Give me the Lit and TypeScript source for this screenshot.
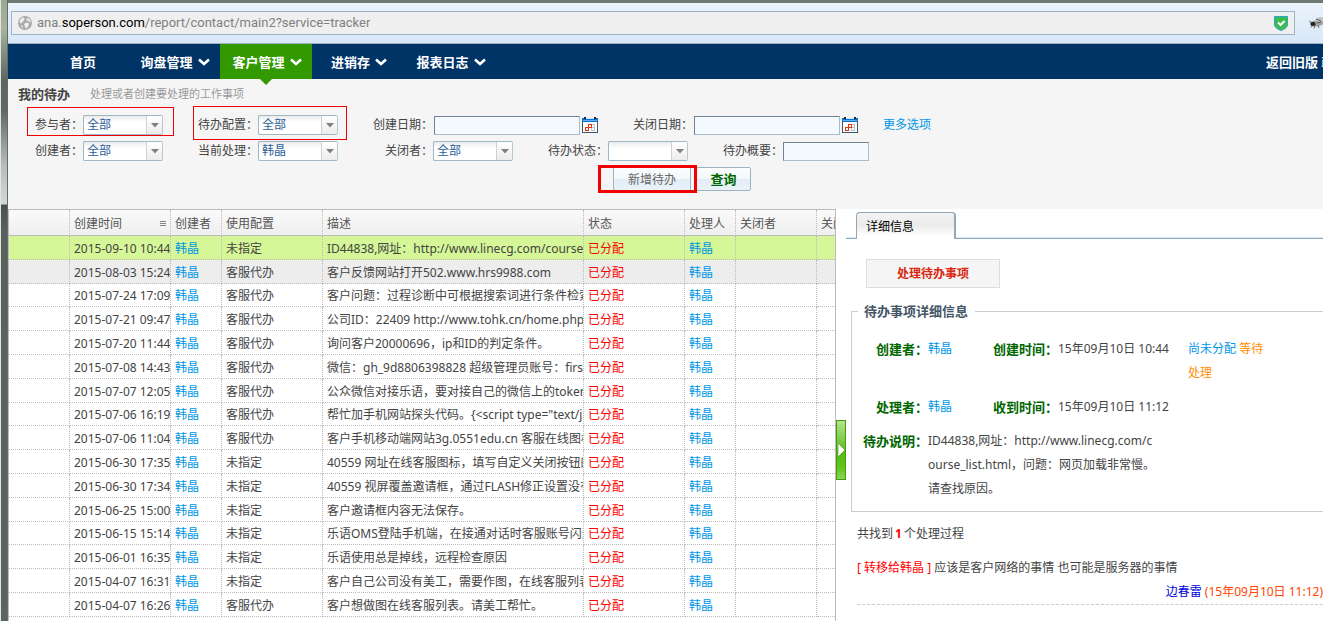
import { LitElement, html, css, nothing } from "lit";
import { customElement, state } from "lit/decorators.js";
import { classMap } from "lit/directives/class-map.js";

interface Task {
  time: string;
  config: string;
  text: string;
}

const UNSET = "未指定";
const SERVICE = "客服代办";

const TASKS: Task[] = [
  { time: "2015-09-10 10:44", config: UNSET, text: "ID44838,网址：http://www.linecg.com/course_list.html" },
  { time: "2015-08-03 15:24", config: SERVICE, text: "客户反馈网站打开502.www.hrs9988.com" },
  { time: "2015-07-24 17:09", config: SERVICE, text: "客户问题：过程诊断中可根据搜索词进行条件检索" },
  { time: "2015-07-21 09:47", config: SERVICE, text: "公司ID：22409 http://www.tohk.cn/home.php" },
  { time: "2015-07-20 11:44", config: SERVICE, text: "询问客户20000696，ip和ID的判定条件。" },
  { time: "2015-07-08 14:43", config: SERVICE, text: "微信：gh_9d8806398828 超级管理员账号：first" },
  { time: "2015-07-07 12:05", config: SERVICE, text: "公众微信对接乐语，要对接自己的微信上的token" },
  { time: "2015-07-06 16:19", config: SERVICE, text: "帮忙加手机网站探头代码。{<script type=\"text/javascript\"" },
  { time: "2015-07-06 11:04", config: SERVICE, text: "客户手机移动端网站3g.0551edu.cn 客服在线图标" },
  { time: "2015-06-30 17:35", config: UNSET, text: "40559 网址在线客服图标，填写自定义关闭按钮的" },
  { time: "2015-06-30 17:34", config: UNSET, text: "40559 视屏覆盖邀请框，通过FLASH修正设置没有" },
  { time: "2015-06-25 15:00", config: UNSET, text: "客户邀请框内容无法保存。" },
  { time: "2015-06-15 15:14", config: UNSET, text: "乐语OMS登陆手机端，在接通对话时客服账号闪退" },
  { time: "2015-06-01 16:35", config: UNSET, text: "乐语使用总是掉线，远程检查原因" },
  { time: "2015-04-07 16:31", config: UNSET, text: "客户自己公司没有美工，需要作图，在线客服列表" },
  { time: "2015-04-07 16:26", config: SERVICE, text: "客户想做图在线客服列表。请美工帮忙。" },
];

const NAV = [
  { label: "首页", menu: false },
  { label: "询盘管理", menu: true },
  { label: "客户管理", menu: true },
  { label: "进销存", menu: true },
  { label: "报表日志", menu: true },
];

const calendarIcon = html`<svg width="16" height="16" viewBox="0 0 16 16" shape-rendering="crispEdges" aria-hidden="true">
  <rect x="0" y="1" width="16" height="15" fill="#44546a" />
  <rect x="1" y="5" width="14" height="10" fill="#fff" />
  <rect x="0" y="1" width="16" height="4" fill="#0a6fd6" />
  <rect x="1" y="3" width="14" height="1" fill="#5db4f5" />
  <rect x="3" y="1" width="10" height="1" fill="#cfe6fa" />
  <rect x="2" y="0" width="2" height="2" fill="#222" /><rect x="12" y="0" width="2" height="2" fill="#222" />
  <rect x="9" y="7" width="4" height="7" fill="#bcc5cc" />
  <rect x="10" y="8" width="2" height="2" fill="#fff" /><rect x="10" y="11" width="2" height="2" fill="#fff" />
  <rect x="3" y="10" width="4" height="4" fill="#e8330c" /><rect x="4" y="11" width="2" height="2" fill="#fff" />
  <rect x="6" y="7" width="4" height="4" fill="#e8330c" /><rect x="7" y="8" width="2" height="2" fill="#fff" />
</svg>`;

@customElement("app-root")
export class AppRoot extends LitElement {
  @state() private current = 0;

  static styles = css`
    :host {
      display: flex;
      height: 100vh;
      overflow: hidden;
      box-sizing: border-box;
      color: #444;
      background: #f5f5f5;
      font: 12px/24px "Noto Sans", "Noto Sans CJK SC", sans-serif;
    }
    * { box-sizing: border-box; }
    a { color: #0096e6; text-decoration: none; }
    button, input, select { font: inherit; margin: 0; border-radius: 0; }

    .edge {
      flex: 0 0 8px;
      border-left: 1px solid #e4e6e6;
      border-right: 1px solid #5d6a70;
      background: linear-gradient(#9aa691 0, #a8b49c 28px, #5c6661 80px, #5f6763 110px, #b9bcba 165px, #d6d8d7 204px, #4a504d 205px, #59615c 230px, #5c645f 100%);
    }
    .window { flex: 1; min-width: 0; display: flex; flex-direction: column; }

    .chrome {
      flex: none;
      display: flex;
      align-items: center;
      gap: 14px;
      height: 44px;
      padding: 0 0 0 3px;
      border-top: 3px solid #6f7872;
      border-bottom: 1px solid #9fb2c4;
      background: linear-gradient(#eaf3fc, #d8e8f8);
      overflow: hidden;
    }
    .address {
      flex: 1;
      display: flex;
      align-items: center;
      height: 24px;
      padding: 0 6px;
      border: 1px solid #9db3c8;
      background: #efefef;
      color: #808080;
      font: 13px/22px Roboto, sans-serif;
    }
    .address .url { flex: 1; margin-left: 5px; }
    .address b { font-weight: 400; color: #000; }
    .bee { flex: none; margin-right: -1px; }
    svg { display: block; flex: none; }

    .nav {
      flex: none;
      display: flex;
      height: 35px;
      padding-left: 28px;
      background: #003366;
      font-size: 13px;
      font-weight: 700;
      white-space: nowrap;
    }
    .nav a {
      display: flex;
      align-items: center;
      justify-content: center;
      gap: 5px;
      width: 92px;
      padding-left: 2px;
      color: #fff;
      position: relative;
    }
    .nav .active { background: #339900; }
    .nav .active::after {
      content: "";
      position: absolute;
      top: 100%;
      left: 50%;
      margin-left: -6px;
      border: 6px solid transparent;
      border-bottom: 0;
      border-top-color: #339900;
    }
    .nav .account {
      margin-left: auto;
      width: 59px;
      justify-content: flex-start;
      overflow: hidden;
    }

    .filters { flex: none; height: 130px; padding-top: 3px; }
    .heading { display: flex; align-items: center; gap: 20px; height: 24px; padding-left: 10px; }
    .heading h1 { margin: 0; font-size: 13px; line-height: 24px; }
    .heading p { margin: 0; font-size: 11px; color: #999; }
    .rows { padding-top: 6px; }
    .row { display: flex; align-items: center; height: 26px; padding-left: 15px; white-space: nowrap; }
    .field { position: relative; display: flex; align-items: center; height: 20px; margin-right: 35px; }
    .field label { width: 60px; text-align: right; }
    .pick { display: flex; position: relative; width: 80px; height: 20px; }
    .pick select {
      width: 100%;
      height: 20px;
      padding: 0 20px 0 3px;
      border: 1px solid #9fb9c4;
      border-right-color: #b5c9d2;
      border-radius: 2px;
      appearance: none;
      background: linear-gradient(#ebebeb, #fff 6px);
      color: #2a6099;
      line-height: 18px;
    }
    .pick .arrow {
      position: absolute;
      top: 1px;
      right: 1px;
      width: 16px;
      height: 18px;
      border-left: 1px solid #d0d0d0;
      background: linear-gradient(#fff, #ececec);
      display: grid;
      place-items: center;
      pointer-events: none;
    }
    .text {
      height: 19px;
      border: 1px solid #a9bccb;
      border-top-color: #6f8296;
      border-left-color: #6f8296;
      background: #f5fafe;
      padding: 0 3px;
    }
    .date { width: 146px; margin-left: 1px; }
    .short { width: 86px; }
    .cal { width: 16px; height: 16px; margin-left: 2px; padding: 0; border: 0; background: none; }
    .more { margin-left: -10px; }
    .mark1::after, .mark2::after {
      content: "";
      position: absolute;
      border: 1px solid #f00000;
      pointer-events: none;
    }
    .mark1::after { inset: -8px -11px -1px 4px; }
    .mark2::after { inset: -9px -9px -5px -5px; }
    .actions { display: flex; align-items: center; gap: 5px; height: 30px; padding-left: 605px; }
    .actions button {
      height: 24px;
      border: 1px solid #9db4be;
      border-radius: 2px;
      background: linear-gradient(#fbfdfe, #f4f8fb 50%, #e3edf6 50%, #eaf2f9);
      color: #666;
      line-height: 20px;
      white-space: nowrap;
    }
    .actions .search { width: 55px; padding: 0; color: #060; font-weight: 700; font-size: 13px; }
    .create { position: relative; width: 78px; display: flex; }
    .create button { flex: 1; padding: 2px 0 0; }
    .create::after {
      content: "";
      position: absolute;
      inset: -2px -6px -2px -15px;
      border: 3px solid #f00000;
      pointer-events: none;
    }

    .body {
      flex: 1;
      min-height: 0;
      display: grid;
      grid-template-columns: minmax(0, 828fr) 10px minmax(0, 477fr);
      background: #fff;
      overflow: hidden;
    }
    .list { border: 1px solid #bbb; border-bottom: 0; overflow: hidden; }
    table { width: 100%; table-layout: fixed; border-spacing: 0; }
    th, td {
      padding: 2px 0 0 4px;
      border-right: 1px dotted #bbb;
      border-bottom: 1px dotted #bbb;
      text-align: left;
      font-weight: 400;
      white-space: nowrap;
      overflow: hidden;
    }
    th:last-child, td:last-child { border-right: 0; }
    th { height: 26px; border-bottom: 1px solid #bbb; background: linear-gradient(#fafafa, #efefef); line-height: 23px; color: #555; }
    th .sort { display: flex; align-items: center; justify-content: space-between; padding-right: 4px; }
    td { height: 24px; line-height: 21px; }
    tbody tr:nth-child(5n + 3) td { height: 23px; line-height: 20px; }
    tbody tr:nth-child(2) td { background: #ededed; }
    tbody tr.selected td { background: #d6f797; }
    .state { color: #f00; }
    .c0 { width: 61px; } .c1 { width: 101px; } .c2 { width: 51px; } .c3 { width: 101px; }
    .c4 { width: 261px; } .c7 { width: 81px; }

    .splitter {
      width: 10px;
      height: 60px;
      margin-top: 211px;
      padding: 0 0 0 1px;
      border: 1px solid #479a12;
      background: linear-gradient(#b3e38c, #58bb17 55%, #5fc41c 80%, #8ad455);
    }

    .detail { padding-top: 3px; overflow: hidden; }
    .tabs { display: flex; height: 27px; padding-left: 10px; border-bottom: 1px solid #92a7b7; box-shadow: inset 0 -1px #dcebf8; }
    .tab {
      width: 100px;
      height: 27px;
      padding: 2px 0 0 9px;
      border: 1px solid #92a7b7;
      border-right-width: 2px;
      border-bottom: 0;
      border-radius: 4px 4px 0 0;
      background: linear-gradient(#f4f4f4, #ebebeb 45%, #fff 90%);
      color: #000;
      text-align: left;
    }
    .handle {
      display: block;
      width: 134px;
      height: 29px;
      margin: 20px 0 0 20px;
      border: 1px solid #ddd;
      background: #f5f5f5;
      color: #d9280f;
      font-weight: 700;
      line-height: 24px;
    }
    fieldset {
      margin: 11px -8px 0 5px;
      padding: 14px 0 10px 11px;
      border: 1px solid #ccc;
      min-width: 0;
    }
    legend { margin-left: -5px; padding: 0 7px 0 6px; color: #456; font-size: 13px; font-weight: 700; line-height: 24px; }
    dl { display: grid; grid-template-columns: 65px 65px 65px 130px 80px; row-gap: 10px; margin: 0; }
    dt { color: #060; font-size: 13px; font-weight: 700; text-align: right; white-space: nowrap; }
    dd { margin: 0; white-space: nowrap; }
    .status span { color: #ff8c00; }
    .note { grid-column: span 4; }
    .log { padding-left: 11px; }
    .log p { margin: 0; line-height: 24px; white-space: nowrap; }
    .log .count { margin: 10px 0; }
    .count b { margin: 0 2px; }
    .log b, .log em { color: #f00; font-style: normal; }
    .log .by { text-align: right; color: #ff4500; border-bottom: 1px dashed #ccc; height: 25px; }
    .log .by a { color: #00d; }
  `;

  private pick(id: string, label: string, value: string, mark = "") {
    return html`<div class="field ${mark}">
      <label for=${id}>${label}：</label>
      <div class="pick">
        <select id=${id}><option>${value}</option></select>
        <span class="arrow"><svg width="8" height="5" viewBox="0 0 8 5"><path d="M0 0h8L4 4.500z" fill="#808080" /></svg></span>
      </div>
    </div>`;
  }

  private date(id: string, label: string) {
    return html`<div class="field">
      <label for=${id}>${label}：</label>
      <input class="text date" id=${id} />
      <button class="cal" aria-label=${label}>${calendarIcon}</button>
    </div>`;
  }

  private renderChrome() {
    return html`<header class="chrome">
      <div class="address">
        <svg width="14" height="14" viewBox="0 0 14 14" aria-hidden="true">
          <circle cx="7" cy="7" r="7" fill="#a9a9a9" />
          <path d="M1.500 5l2-3 2-.5 1.500 1-1.500 1.500.5 1-2 1-.5 1.500-1.500-.5z M9 2l2.500 1 1.500 3-1.500.5-.5-1.500-2-.5-1 .5.500-1.500z M7 7l2-.5 2 1-.5 2-1.500 2.500-1.500.5-.5-2.500-1-1z M3 9l1.500.5.5 2-1 .5z" fill="#efefef" />
        </svg>
        <span class="url">ana.<b>soperson.com</b>/report/contact/main2?service=tracker</span>
        <svg width="14" height="15" viewBox="0 0 14 15" aria-hidden="true">
          <path d="M.5.5h13v8.500C13 12 9.500 13.500 7 14.500 4.500 13.500 1 12 .5 9z" fill="#3dbb4b" stroke="#2da3cf" />
          <path d="M4 6.500l2.500 2.500L10.500 5" fill="none" stroke="#fff" stroke-width="2" />
        </svg>
      </div>
      <svg class="bee" width="15" height="14" viewBox="0 0 15 14" aria-hidden="true">
        <path d="M1 6l5-1.500 4 1L15 4v4l-5 2-5 1-3-1z" fill="#a2a2a2" />
        <ellipse cx="4" cy="8" rx="2.600" ry="2" fill="#222" />
        <path d="M6 4l4-3 5 0v4l-5 1z" fill="#c5c8c8" />
        <path d="M3 9.500l-1 2M6 9.500l-1 3M9 9l1 3M0 5l2 1" stroke="#777" fill="none" />
        <path d="M7 3l5 2M8 7l4-1" stroke="#555" />
      </svg>
    </header>`;
  }

  render() {
    return html`
      <div class="edge"></div>
      <div class="window">
        ${this.renderChrome()}
        <nav class="nav">
          ${NAV.map(
            (n, i) => html`<a href="#" class=${classMap({ active: i === 2 })}>${n.label}${n.menu
                ? html`<svg width="12" height="8" viewBox="0 0 12 8"><path d="M1 1.500l5 4.500 5-4.500" fill="none" stroke="#fff" stroke-width="2.600" /></svg>`
                : nothing}</a>`
          )}
          <a href="#" class="account">返回旧版 韩晶</a>
        </nav>

        <section class="filters">
          <div class="heading"><h1>我的待办</h1><p>处理或者创建要处理的工作事项</p></div>
          <div class="rows">
            <div class="row">
              ${this.pick("joiner", "参与者", "全部", "mark1")}
              ${this.pick("config", "待办配置", "全部", "mark2")}
              ${this.date("created", "创建日期")}
              ${this.date("closed", "关闭日期")}
              <a class="more" href="#">更多选项</a>
            </div>
            <div class="row">
              ${this.pick("creator", "创建者", "全部")}
              ${this.pick("owner", "当前处理", "韩晶")}
              ${this.pick("closer", "关闭者", "全部")}
              ${this.pick("status", "待办状态", "")}
              <div class="field"><label for="summary">待办概要：</label><input class="text short" id="summary" /></div>
            </div>
          </div>
          <div class="actions">
            <div class="create"><button>新增待办</button></div>
            <button class="search">查询</button>
          </div>
        </section>

        <main class="body">
          <div class="list">
            <table>
              <thead>
                <tr>
                  <th class="c0"></th>
                  <th class="c1"><span class="sort">创建时间
                    <svg width="6" height="6" viewBox="0 0 6 6"><path d="M0 .5h6M0 2.500h6M0 4.500h6" stroke="#888" /></svg></span></th>
                  <th class="c2">创建者</th>
                  <th class="c3">使用配置</th>
                  <th class="c4">描述</th>
                  <th class="c1">状态</th>
                  <th class="c2">处理人</th>
                  <th class="c7">关闭者</th>
                  <th>关闭时间</th>
                </tr>
              </thead>
              <tbody>
                ${TASKS.map(
                  (t, i) => html`<tr class=${classMap({ selected: i === this.current })} @click=${() => (this.current = i)}>
                    <td></td>
                    <td>${t.time}</td>
                    <td><a href="#">韩晶</a></td>
                    <td>${t.config}</td>
                    <td>${t.text}</td>
                    <td class="state">已分配</td>
                    <td><a href="#">韩晶</a></td>
                    <td></td>
                    <td></td>
                  </tr>`
                )}
              </tbody>
            </table>
          </div>

          <button class="splitter" aria-label="收起">
            <svg width="7" height="14" viewBox="0 0 7 14"><path d="M0 0l7 7-7 7z" fill="#fff" stroke="#3f8212" stroke-width=".6" /></svg>
          </button>

          <aside class="detail">
            <div class="tabs"><button class="tab">详细信息</button></div>
            <button class="handle">处理待办事项</button>
            <fieldset>
              <legend>待办事项详细信息</legend>
              <dl>
                <dt>创建者：</dt><dd><a href="#">韩晶</a></dd>
                <dt>创建时间：</dt><dd>15年09月10日 10:44</dd>
                <dd class="status"><a href="#">尚未分配</a> <span>等待<br />处理</span></dd>
                <dt>处理者：</dt><dd><a href="#">韩晶</a></dd>
                <dt>收到时间：</dt><dd>15年09月10日 11:12</dd>
                <dd></dd>
                <dt>待办说明：</dt>
                <dd class="note">ID44838,网址：http://www.linecg.com/c<br />ourse_list.html，问题：网页加载非常慢。<br />请查找原因。</dd>
              </dl>
            </fieldset>
            <div class="log">
              <p class="count">共找到<b>1</b>个处理过程</p>
              <p><em>[ 转移给韩晶 ]</em> 应该是客户网络的事情 也可能是服务器的事情</p>
              <p class="by"><a href="#">边春雷</a> (15年09月10日 11:12)</p>
            </div>
          </aside>
        </main>
      </div>
    `;
  }
}
